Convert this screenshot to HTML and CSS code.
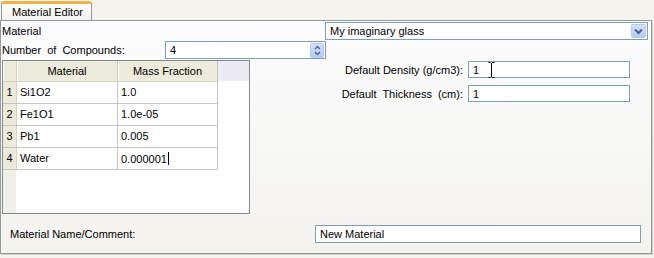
FILE: index.html
```html
<html><head><link rel="stylesheet" href="styles.css"></head><body>
<div class="tabbar">
  <div class="tab">Material Editor</div>
</div>
<div class="panel">
  <div class="row top">
    <span class="lbl">Material</span>
    <div class="combo">
      <span class="val">My imaginary glass</span>
      <span class="btn"><svg width="9" height="7" viewBox="0 0 9 7"><path d="M1 1.5 L4.5 5 L8 1.5" fill="none" stroke="#4d6185" stroke-width="2"/></svg></span>
    </div>
  </div>
  <div class="row count">
    <span class="lbl wide">Number of Compounds:</span>
    <div class="spin">
      <span class="val">4</span>
      <span class="btn"><svg width="7" height="11" viewBox="0 0 7 11"><path d="M1 4 L3.5 1.5 L6 4 M1 7 L3.5 9.5 L6 7" fill="none" stroke="#4d6185" stroke-width="1.3"/></svg></span>
    </div>
  </div>
  <div class="middle">
    <div class="grid">
      <table>
        <tr class="head"><th class="num"></th><th class="c1">Material</th><th class="c2">Mass Fraction</th><th class="fill"></th></tr>
        <tr><td class="num">1</td><td>Si1O2</td><td>1.0</td><td class="fill"></td></tr>
        <tr><td class="num">2</td><td>Fe1O1</td><td>1.0e-05</td><td class="fill"></td></tr>
        <tr><td class="num">3</td><td>Pb1</td><td>0.005</td><td class="fill"></td></tr>
        <tr><td class="num">4</td><td>Water</td><td>0.000001<span class="caret"></span></td><td class="fill"></td></tr>
      </table>
    </div>
    <div class="form">
      <span class="flbl">Default Density (g/cm3):</span>
      <div class="field">1<svg class="ibeam" width="7" height="16" viewBox="0 0 7 16"><path d="M0.5 0.5 H2.5 L3.5 1.5 L4.5 0.5 H6.5 M3.5 1.5 V14.5 M0.5 15.5 H2.5 L3.5 14.5 L4.5 15.5 H6.5" fill="none" stroke="#000" stroke-width="1"/></svg></div>
      <span class="flbl wide">Default Thickness (cm):</span>
      <div class="field">1</div>
    </div>
  </div>
  <div class="row bottom">
    <span class="lbl">Material Name/Comment:</span>
    <div class="field name">New Material</div>
  </div>
</div>
</body></html>
```
FILE: styles.css
```css
body{margin:0;background:#f5f4ef;font-family:"Liberation Sans",Arial,sans-serif;font-size:11px;color:#000;width:654px;height:258px;overflow:hidden;}
.tabbar{display:flex;height:21px;padding-left:1px;}
.tab{margin-top:1px;width:79px;height:16px;border:1px solid #919b9c;border-bottom:none;border-top:3px solid #f4b34a;border-radius:3px 3px 0 0;background:linear-gradient(#fefefe,#f4f3ee);position:relative;z-index:1;line-height:16px;padding-left:10px;box-sizing:content-box;}
.panel{width:650px;height:232px;border:1px solid #919b9c;margin-top:-1px;background:linear-gradient(#fcfcfe,#f4f3ee);box-shadow:1px 1px 0 #d0cfc8;}
.row{display:flex;align-items:center;}
.top{padding:1px 3px 0 1px;height:18px;}
.top .combo{margin-left:auto;}
.count{margin-top:1px;height:18px;padding-left:1px;}
.count .lbl{width:163px;}
.wide{word-spacing:3px;}
.combo,.spin{display:flex;align-items:center;border:1px solid #7f9db9;background:#fff;height:16px;box-sizing:content-box;}
.combo{width:321px;}
.spin{width:159px;}
.val{flex:1;padding-left:4px;}
.btn{display:flex;align-items:center;justify-content:center;width:15px;height:14px;margin-right:1px;border-radius:2px;background:linear-gradient(#d3e0fc,#b6cbf7);border:1px solid #b7c9f3;box-sizing:border-box;}
.spin .btn{width:14px;height:15px;}
.middle{display:flex;margin-top:1px;}
.grid{margin-left:1px;width:246px;height:152px;border:1px solid #828790;background:linear-gradient(90deg,#efeee9 0 13px,#fff 13px);}
.grid table{border-collapse:collapse;width:100%;font:inherit;}
.grid th{height:20px;padding:0;font-weight:normal;background:#ebeadb;border-right:1px solid #cbc7b8;border-bottom:1px solid #d6d2c2;box-shadow:inset 1px 0 #fff;}
.grid td{height:22px;padding:0 0 0 3px;border-right:1px solid #c7c6c2;border-bottom:1px solid #c7c6c2;}
.grid .num{width:13px;padding:0;text-align:center;background:#ebeadb;border-right:1px solid #d6d2c2;}
.grid .c1{width:100px;}
.grid .c2{width:99px;}
.grid th.fill{background:#ecebf3;border:none;box-shadow:none;}
.grid td.fill{border:none;background:#fff;}
.caret{display:inline-block;width:1px;height:13px;background:#000;vertical-align:-2px;margin-left:1px;}
.form{display:grid;grid-template-columns:213px 162px;column-gap:5px;row-gap:7px;padding-top:1px;align-items:center;align-content:start;}
.flbl{text-align:right;}
.field{display:flex;align-items:center;height:15px;border:1px solid #7f9db9;background:#fff;padding-left:4px;}
.ibeam{margin-left:9px;}
.bottom{margin-top:11px;height:18px;}
.bottom .lbl{padding-left:9px;}
.field.name{margin-left:auto;margin-right:10px;width:320px;height:16px;}
```
